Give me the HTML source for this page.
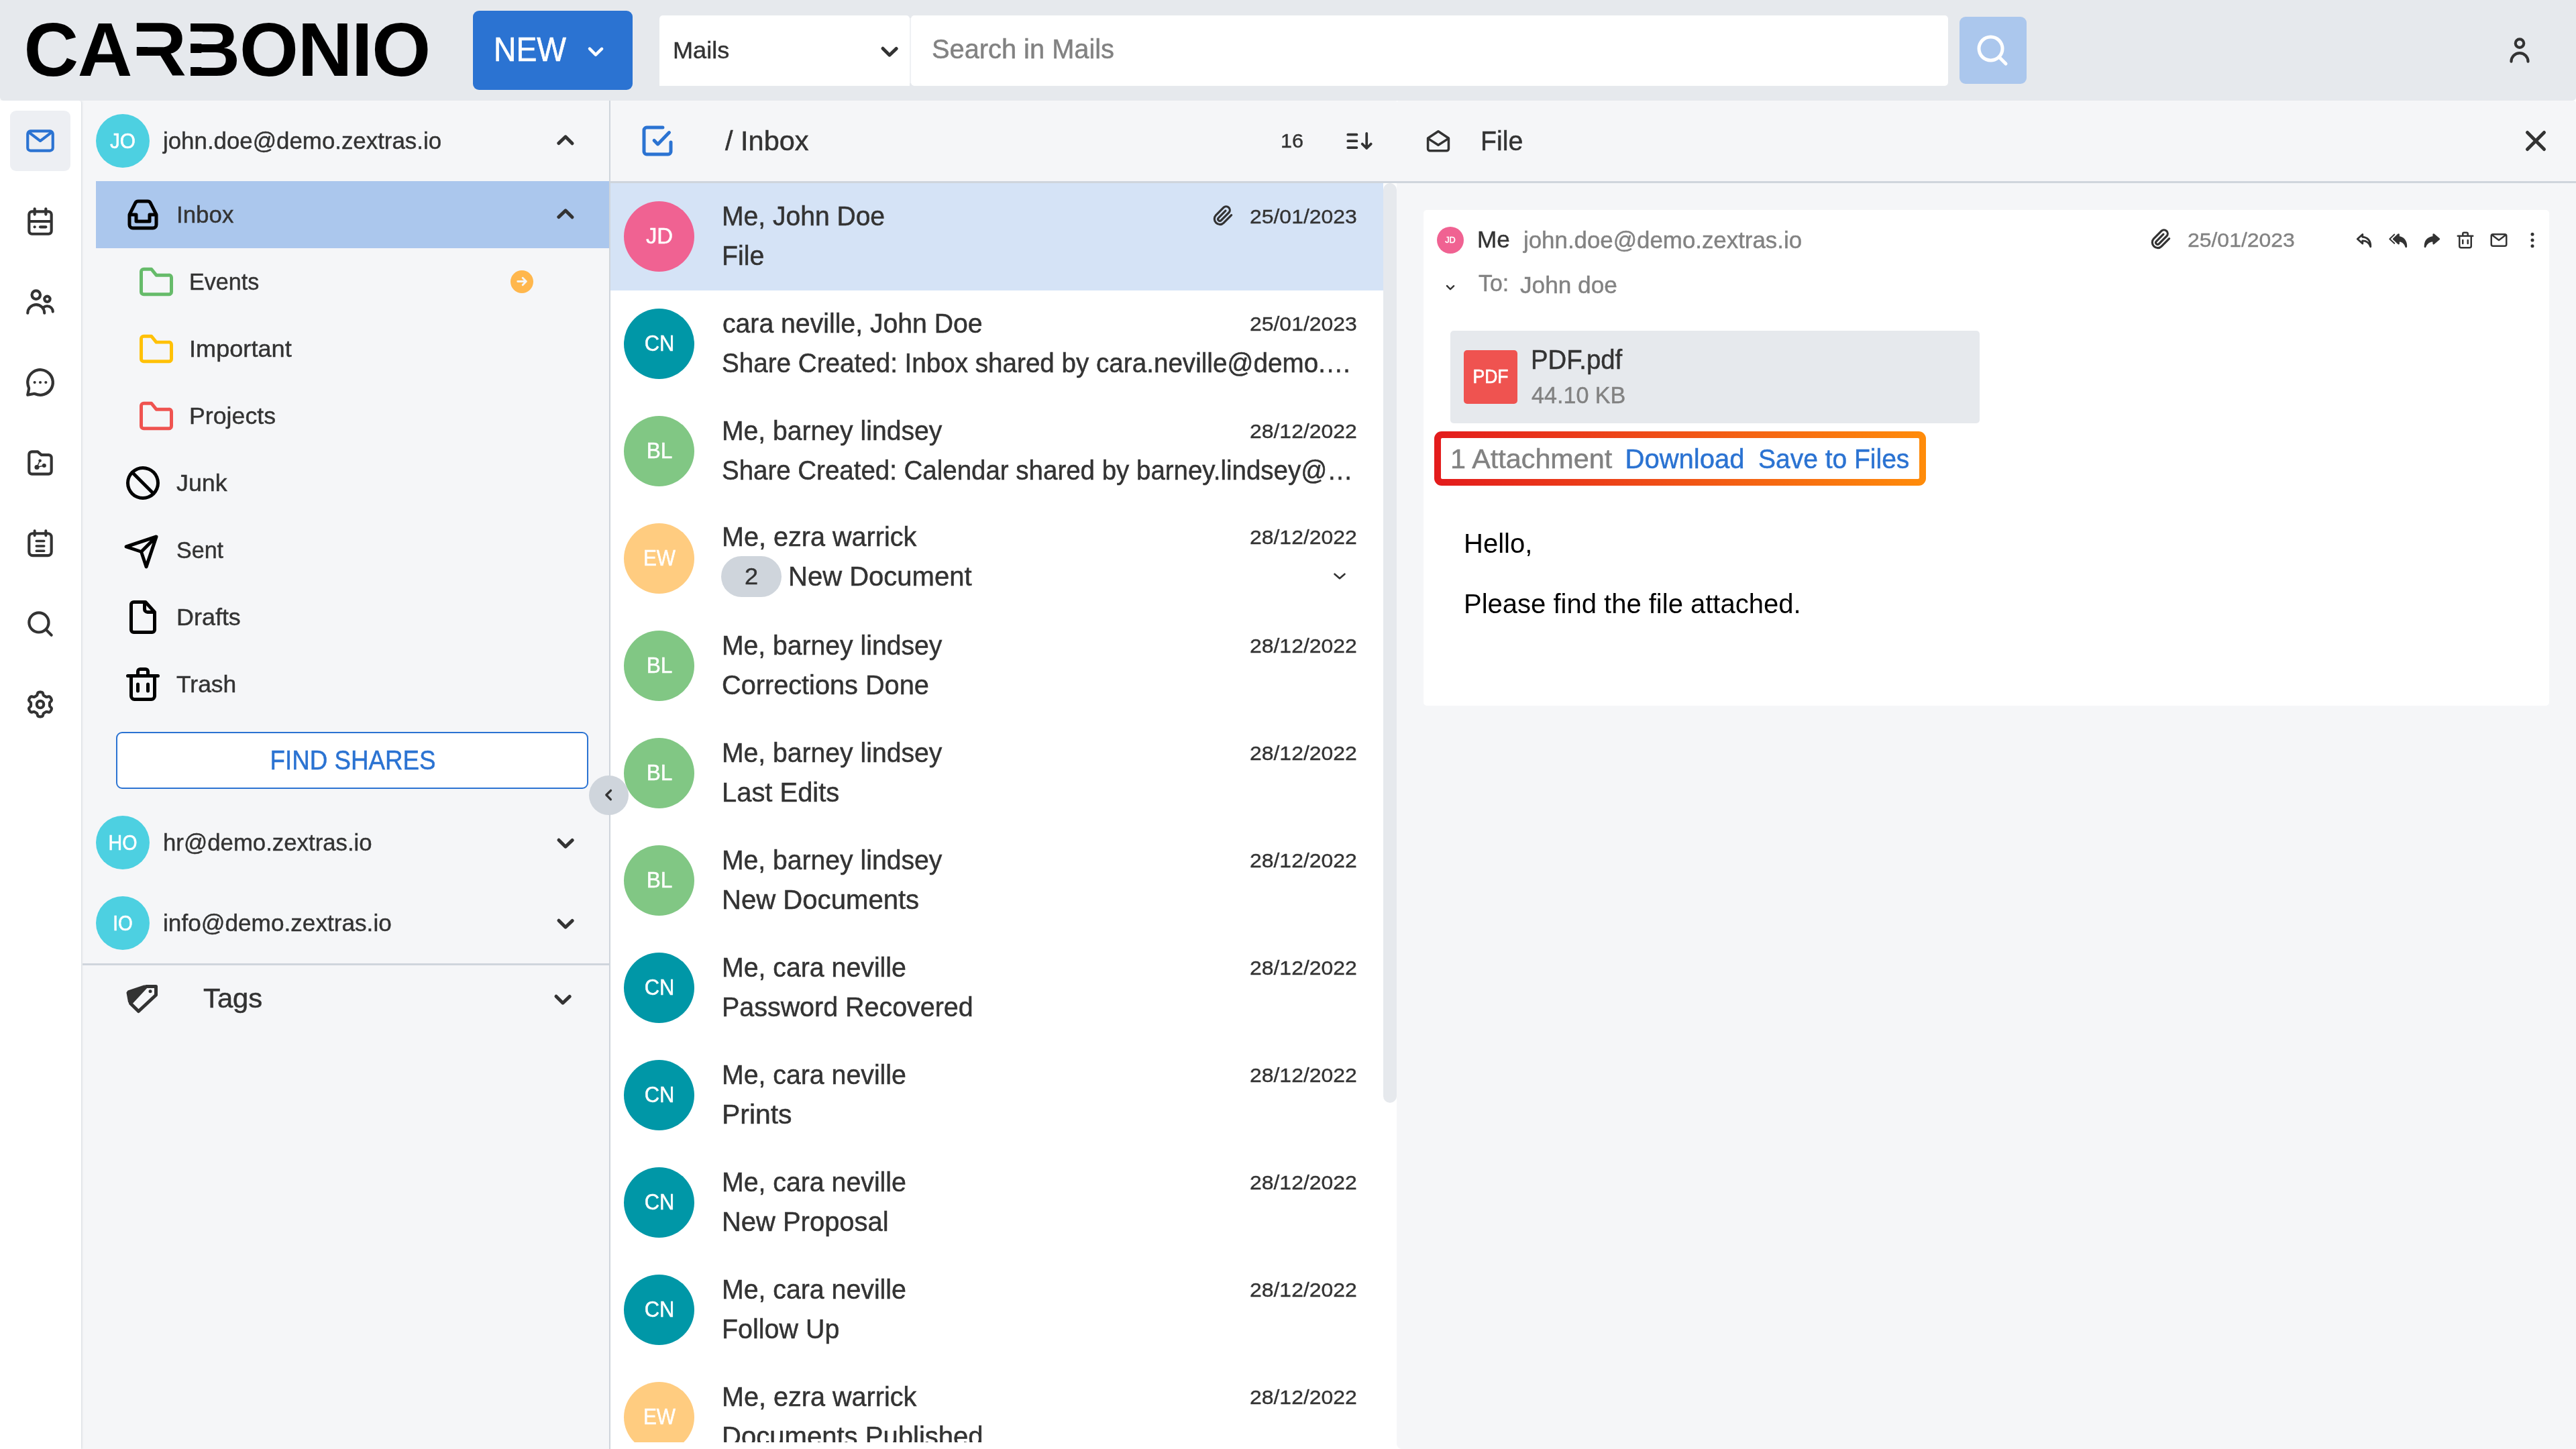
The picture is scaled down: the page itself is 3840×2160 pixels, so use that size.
<!DOCTYPE html>
<html lang="en"><head><meta charset="utf-8"><title>Carbonio - Mails</title>
<style>
html,body{margin:0;padding:0;}
body{width:3840px;height:2160px;overflow:hidden;background:#fff;position:relative;font-family:"Liberation Sans",sans-serif;}
.b{position:absolute;}
.t{position:absolute;white-space:nowrap;display:block;}
#app{position:absolute;left:0;top:0;width:3840px;height:2160px;overflow:hidden;will-change:transform;}
.ic{position:absolute;display:block;overflow:visible;}
</style></head>
<body>
<div id="app">
<div class="b" style="left:121px;top:150px;width:789px;height:2010px;background:#f5f6f8;"></div>
<div class="b" style="left:0px;top:150px;width:121px;height:2010px;background:#ffffff;border-radius:0 4px 0 0;box-shadow:1px 0 3px rgba(150,160,175,.35);"></div>
<div class="b" style="left:908px;top:150px;width:2px;height:2010px;background:#cfd5dc;"></div>
<div class="b" style="left:910px;top:150px;width:1172px;height:121px;background:#f5f6f8;"></div>
<div class="b" style="left:910px;top:273px;width:1172px;height:1887px;background:#ffffff;"></div>
<div class="b" style="left:2082px;top:150px;width:1758px;height:2010px;background:#f5f6f8;border-radius:4px 4px 0 8px;"></div>
<div class="b" style="left:910px;top:270.3px;width:2930px;height:2.7px;background:#cfd5dc;"></div>
<div class="b" style="left:0px;top:0px;width:3840px;height:150px;background:#e6e9ed;border-radius:0 0 5px 5px;"></div>
<span id="t0" class="t" style="left:35.4px;transform-origin:0 50%;top:14.1px;height:120px;line-height:120px;font-size:113px;color:#000;font-weight:700;transform:scaleX(1.0);letter-spacing:-1.2px;">CARBONIO</span>
<div class="b" style="left:202.6px;top:47.3px;width:19.4px;height:23px;background:#e6e9ed;"></div>
<div class="b" style="left:202.6px;top:83.1px;width:19.4px;height:32px;background:#e6e9ed;"></div>
<div class="b" style="left:282.8px;top:47.3px;width:19.4px;height:18px;background:#e6e9ed;"></div>
<div class="b" style="left:282.8px;top:78.7px;width:19.4px;height:21.6px;background:#e6e9ed;"></div>
<div class="b" style="left:705px;top:16px;width:238px;height:118px;background:#2b73d2;border-radius:9px;"></div>
<span id="t1" class="t" style="left:735.5px;transform-origin:0 50%;top:41.5px;height:65px;line-height:65px;font-size:50px;color:#fff;-webkit-text-stroke:0.625px;transform:scaleX(0.9265);">NEW</span>
<svg class="ic" style="left:861px;top:48.5px;width:54px;height:54px;color:#fff;" viewBox="0 0 24 24" fill="currentColor"><path d="M12 15.5a1 1 0 0 1-.71-.29l-4-4a1 1 0 1 1 1.42-1.42L12 13.1l3.3-3.18a1 1 0 1 1 1.38 1.44l-4 3.86a1 1 0 0 1-.68.28z" /></svg>
<div class="b" style="left:1350px;top:27px;width:14px;height:97px;background:#eff1f4;"></div>
<div class="b" style="left:983px;top:23px;width:373px;height:105px;background:#fff;border-radius:5px 5px 0 0;"></div>
<span id="t2" class="t" style="left:1003px;transform-origin:0 50%;top:51.5px;height:46px;line-height:46px;font-size:35px;color:#333333;-webkit-text-stroke:0.438px;transform:scaleX(1.0325);">Mails</span>
<svg class="ic" style="left:1296px;top:45.5px;width:60px;height:60px;color:#333333;" viewBox="0 0 24 24" fill="currentColor"><path d="M12 15.5a1 1 0 0 1-.71-.29l-4-4a1 1 0 1 1 1.42-1.42L12 13.1l3.3-3.18a1 1 0 1 1 1.38 1.44l-4 3.86a1 1 0 0 1-.68.28z" /></svg>
<div class="b" style="left:1358.4px;top:23px;width:1545.6px;height:105px;background:#fff;border-radius:5px;"></div>
<span id="t3" class="t" style="left:1388.5px;transform-origin:0 50%;top:47px;height:52px;line-height:52px;font-size:40px;color:#828282;-webkit-text-stroke:0.5px;transform:scaleX(0.9947);">Search in Mails</span>
<div class="b" style="left:2921px;top:25px;width:100px;height:100px;background:#abc7ed;border-radius:9px;"></div>
<svg class="ic" style="left:2940.2px;top:44.7px;width:60px;height:60px;color:#fff;" viewBox="0 0 24 24" fill="currentColor"><path d="M20.71 19.29l-3.4-3.39A7.92 7.92 0 0 0 19 11a8 8 0 1 0-8 8 7.92 7.92 0 0 0 4.9-1.69l3.39 3.4a1 1 0 0 0 1.42 0 1 1 0 0 0 0-1.42zM5 11a6 6 0 1 1 6 6 6 6 0 0 1-6-6z" /></svg>
<svg class="ic" style="left:3731px;top:50px;width:50px;height:50px;color:#333333;" viewBox="0 0 24 24" fill="currentColor"><path d="M12 11a4 4 0 1 0-4-4 4 4 0 0 0 4 4zm0-6a2 2 0 1 1-2 2 2 2 0 0 1 2-2zM12 13a7 7 0 0 0-7 7 1 1 0 0 0 2 0 5 5 0 0 1 10 0 1 1 0 0 0 2 0 7 7 0 0 0-7-7z" /></svg>
<div class="b" style="left:15px;top:165px;width:90px;height:90px;background:#edeff3;border-radius:9px;"></div>
<svg class="ic" style="left:35px;top:185px;width:50px;height:50px;color:#2b73d2;" viewBox="0 0 24 24" fill="currentColor"><path d="M19 4H5a3 3 0 0 0-3 3v10a3 3 0 0 0 3 3h14a3 3 0 0 0 3-3V7a3 3 0 0 0-3-3zm-.67 2L12 10.75 5.67 6zM19 18H5a1 1 0 0 1-1-1V7.25l7.4 5.55a1 1 0 0 0 .6.2 1 1 0 0 0 .6-.2L20 7.25V17a1 1 0 0 1-1 1z" /></svg>
<svg class="ic" style="left:35px;top:305px;width:50px;height:50px;color:#333333;" viewBox="0 0 24 24" fill="currentColor"><path d="M18 4h-1V3a1 1 0 0 0-2 0v1H9V3a1 1 0 0 0-2 0v1H6a3 3 0 0 0-3 3v12a3 3 0 0 0 3 3h12a3 3 0 0 0 3-3V7a3 3 0 0 0-3-3zM6 6h1v1a1 1 0 0 0 2 0V6h6v1a1 1 0 0 0 2 0V6h1a1 1 0 0 1 1 1v4H5V7a1 1 0 0 1 1-1zm12 14H6a1 1 0 0 1-1-1v-6h14v6a1 1 0 0 1-1 1z" /><circle cx="8" cy="16" r="1"/><path d="M16 15h-4a1 1 0 0 0 0 2h4a1 1 0 0 0 0-2z" /></svg>
<svg class="ic" style="left:35px;top:425px;width:50px;height:50px;color:#333333;" viewBox="0 0 24 24" fill="currentColor"><path d="M9 11a4 4 0 1 0-4-4 4 4 0 0 0 4 4zm0-6a2 2 0 1 1-2 2 2 2 0 0 1 2-2zM17 13a3 3 0 1 0-3-3 3 3 0 0 0 3 3zm0-4a1 1 0 1 1-1 1 1 1 0 0 1 1-1zM17 14a5 5 0 0 0-3.06 1.05A7 7 0 0 0 2 20a1 1 0 0 0 2 0 5 5 0 0 1 10 0 1 1 0 0 0 2 0 6.9 6.9 0 0 0-.86-3.35A3 3 0 0 1 20 19a1 1 0 0 0 2 0 5 5 0 0 0-5-5z" /></svg>
<svg class="ic" style="left:35px;top:545px;width:50px;height:50px;color:#333333;" viewBox="0 0 24 24" fill="currentColor"><circle cx="12" cy="12" r="1"/><circle cx="16" cy="12" r="1"/><circle cx="8" cy="12" r="1"/><path d="M19.07 4.93a10 10 0 0 0-16.28 11 1.06 1.06 0 0 1 .09.64L2 20.8a1 1 0 0 0 .27.91A1 1 0 0 0 3 22h.2l4.28-.86a1.26 1.26 0 0 1 .64.09 10 10 0 0 0 11-16.28zm.83 8.36a8 8 0 0 1-11 6.08 3.26 3.26 0 0 0-1.25-.26 3.43 3.43 0 0 0-.56.05l-2.82.57.57-2.82a3.09 3.09 0 0 0-.21-1.81 8 8 0 0 1 6.08-11 8 8 0 0 1 9.19 9.19z" /></svg>
<svg class="ic" style="left:35px;top:665px;width:50px;height:50px;color:#333333;" viewBox="0 0 24 24" fill="currentColor"><path d="M6 4h4.2l2.6 2.300h5.200a2 2 0 0 1 2 2v9.700a2 2 0 0 1-2 2H6a2 2 0 0 1-2-2V6a2 2 0 0 1 2-2z" fill="none" stroke="currentColor" stroke-width="2" stroke-linejoin="round"/><circle cx="11.8" cy="10.4" r="1.1"/><circle cx="9.6" cy="15.1" r="1.7"/><circle cx="14.8" cy="13.9" r="1.45"/><path d="M11.8 10.4L9.600 15.100L14.800 13.900" fill="none" stroke="currentColor" stroke-width="0.700"/></svg>
<svg class="ic" style="left:35px;top:785px;width:50px;height:50px;color:#333333;" viewBox="0 0 24 24" fill="currentColor"><rect x="4" y="4.9" width="16" height="15.800" rx="2.600" fill="none" stroke="currentColor" stroke-width="2"/><path d="M8 3v3.400M16 3v3.400" fill="none" stroke="currentColor" stroke-width="1.900" stroke-linecap="round"/><path d="M9.2 10.300h5.600M9.200 13.900h5.600M9.200 17.400h5.600" fill="none" stroke="currentColor" stroke-width="1.600" stroke-linecap="round"/></svg>
<svg class="ic" style="left:35px;top:905px;width:50px;height:50px;color:#333333;" viewBox="0 0 24 24" fill="currentColor"><path d="M20.71 19.29l-3.4-3.39A7.92 7.92 0 0 0 19 11a8 8 0 1 0-8 8 7.92 7.92 0 0 0 4.9-1.69l3.39 3.4a1 1 0 0 0 1.42 0 1 1 0 0 0 0-1.42zM5 11a6 6 0 1 1 6 6 6 6 0 0 1-6-6z" /></svg>
<svg class="ic" style="left:35px;top:1025px;width:50px;height:50px;color:#333333;" viewBox="0 0 24 24" fill="currentColor"><path d="M18.70 12.00L18.70 12.06L18.70 12.12L18.70 12.18L18.70 12.23L18.70 12.29L18.70 12.35L18.70 12.41L18.70 12.47L18.70 12.53L18.69 12.59L18.70 12.64L18.70 12.70L18.70 12.76L18.70 12.82L18.71 12.88L18.72 12.94L18.73 13.01L18.74 13.07L18.76 13.13L18.78 13.20L18.81 13.26L18.85 13.33L18.90 13.40L18.96 13.48L19.03 13.56L19.10 13.64L19.19 13.73L19.28 13.82L19.38 13.91L19.49 14.01L19.59 14.10L19.68 14.20L19.77 14.30L19.85 14.40L19.92 14.50L19.98 14.59L20.02 14.68L20.05 14.77L20.08 14.86L20.09 14.95L20.10 15.03L20.10 15.11L20.09 15.19L20.08 15.27L20.07 15.34L20.05 15.42L20.03 15.49L20.01 15.57L19.98 15.64L19.96 15.71L19.93 15.78L19.90 15.85L19.87 15.92L19.84 15.99L19.80 16.06L19.77 16.13L19.73 16.20L19.70 16.27L19.66 16.33L19.62 16.40L19.58 16.47L19.54 16.53L19.50 16.60L19.46 16.66L19.42 16.73L19.38 16.79L19.33 16.85L19.29 16.91L19.24 16.98L19.19 17.04L19.14 17.09L19.09 17.15L19.04 17.21L18.99 17.26L18.93 17.32L18.87 17.37L18.81 17.42L18.74 17.46L18.67 17.50L18.60 17.54L18.52 17.57L18.43 17.59L18.33 17.60L18.23 17.61L18.12 17.61L18.00 17.60L17.88 17.58L17.75 17.55L17.62 17.52L17.48 17.48L17.35 17.44L17.21 17.40L17.09 17.36L16.97 17.33L16.86 17.31L16.76 17.29L16.67 17.27L16.58 17.27L16.50 17.27L16.43 17.28L16.36 17.29L16.29 17.30L16.23 17.32L16.18 17.34L16.12 17.37L16.06 17.39L16.01 17.42L15.96 17.45L15.91 17.48L15.85 17.51L15.80 17.53L15.75 17.56L15.70 17.59L15.65 17.62L15.60 17.65L15.55 17.68L15.50 17.71L15.45 17.74L15.40 17.77L15.35 17.80L15.30 17.83L15.25 17.86L15.20 17.89L15.15 17.92L15.10 17.95L15.04 17.98L14.99 18.00L14.94 18.03L14.89 18.06L14.84 18.09L14.79 18.12L14.74 18.15L14.69 18.18L14.64 18.22L14.59 18.25L14.54 18.29L14.49 18.33L14.45 18.37L14.40 18.42L14.36 18.47L14.31 18.53L14.27 18.60L14.23 18.68L14.20 18.77L14.16 18.86L14.13 18.97L14.10 19.09L14.07 19.22L14.04 19.35L14.01 19.49L13.97 19.62L13.93 19.76L13.89 19.88L13.85 20.00L13.80 20.11L13.74 20.20L13.69 20.29L13.63 20.36L13.56 20.43L13.50 20.48L13.43 20.53L13.36 20.57L13.29 20.60L13.21 20.63L13.14 20.66L13.07 20.68L12.99 20.70L12.92 20.72L12.84 20.73L12.77 20.75L12.69 20.76L12.61 20.77L12.54 20.77L12.46 20.78L12.38 20.79L12.31 20.79L12.23 20.80L12.15 20.80L12.08 20.80L12.00 20.80L11.92 20.80L11.85 20.80L11.77 20.80L11.69 20.79L11.62 20.79L11.54 20.78L11.46 20.77L11.39 20.77L11.31 20.76L11.23 20.75L11.16 20.73L11.08 20.72L11.01 20.70L10.93 20.68L10.86 20.66L10.79 20.63L10.71 20.60L10.64 20.57L10.57 20.53L10.50 20.48L10.44 20.43L10.37 20.36L10.31 20.29L10.26 20.20L10.20 20.11L10.15 20.00L10.11 19.88L10.07 19.76L10.03 19.62L9.99 19.49L9.96 19.35L9.93 19.22L9.90 19.09L9.87 18.97L9.84 18.86L9.80 18.77L9.77 18.68L9.73 18.60L9.69 18.53L9.64 18.47L9.60 18.42L9.55 18.37L9.51 18.33L9.46 18.29L9.41 18.25L9.36 18.22L9.31 18.18L9.26 18.15L9.21 18.12L9.16 18.09L9.11 18.06L9.06 18.03L9.01 18.00L8.96 17.98L8.90 17.95L8.85 17.92L8.80 17.89L8.75 17.86L8.70 17.83L8.65 17.80L8.60 17.77L8.55 17.74L8.50 17.71L8.45 17.68L8.40 17.65L8.35 17.62L8.30 17.59L8.25 17.56L8.20 17.53L8.15 17.51L8.09 17.48L8.04 17.45L7.99 17.42L7.94 17.39L7.88 17.37L7.82 17.34L7.77 17.32L7.71 17.30L7.64 17.29L7.57 17.28L7.50 17.27L7.42 17.27L7.33 17.27L7.24 17.29L7.14 17.31L7.03 17.33L6.91 17.36L6.79 17.40L6.65 17.44L6.52 17.48L6.38 17.52L6.25 17.55L6.12 17.58L6.00 17.60L5.88 17.61L5.77 17.61L5.67 17.60L5.57 17.59L5.48 17.57L5.40 17.54L5.33 17.50L5.26 17.46L5.19 17.42L5.13 17.37L5.07 17.32L5.01 17.26L4.96 17.21L4.91 17.15L4.86 17.09L4.81 17.04L4.76 16.98L4.71 16.91L4.67 16.85L4.62 16.79L4.58 16.73L4.54 16.66L4.50 16.60L4.46 16.53L4.42 16.47L4.38 16.40L4.34 16.33L4.30 16.27L4.27 16.20L4.23 16.13L4.20 16.06L4.16 15.99L4.13 15.92L4.10 15.85L4.07 15.78L4.04 15.71L4.02 15.64L3.99 15.57L3.97 15.49L3.95 15.42L3.93 15.34L3.92 15.27L3.91 15.19L3.90 15.11L3.90 15.03L3.91 14.95L3.92 14.86L3.95 14.77L3.98 14.68L4.02 14.59L4.08 14.50L4.15 14.40L4.23 14.30L4.32 14.20L4.41 14.10L4.51 14.01L4.62 13.91L4.72 13.82L4.81 13.73L4.90 13.64L4.97 13.56L5.04 13.48L5.10 13.40L5.15 13.33L5.19 13.26L5.22 13.20L5.24 13.13L5.26 13.07L5.27 13.01L5.28 12.94L5.29 12.88L5.30 12.82L5.30 12.76L5.30 12.70L5.30 12.64L5.31 12.59L5.30 12.53L5.30 12.47L5.30 12.41L5.30 12.35L5.30 12.29L5.30 12.23L5.30 12.18L5.30 12.12L5.30 12.06L5.30 12.00L5.30 11.94L5.30 11.88L5.30 11.82L5.30 11.77L5.30 11.71L5.30 11.65L5.30 11.59L5.30 11.53L5.30 11.47L5.31 11.41L5.30 11.36L5.30 11.30L5.30 11.24L5.30 11.18L5.29 11.12L5.28 11.06L5.27 10.99L5.26 10.93L5.24 10.87L5.22 10.80L5.19 10.74L5.15 10.67L5.10 10.60L5.04 10.52L4.97 10.44L4.90 10.36L4.81 10.27L4.72 10.18L4.62 10.09L4.51 9.99L4.41 9.90L4.32 9.80L4.23 9.70L4.15 9.60L4.08 9.50L4.02 9.41L3.98 9.32L3.95 9.23L3.92 9.14L3.91 9.05L3.90 8.97L3.90 8.89L3.91 8.81L3.92 8.73L3.93 8.66L3.95 8.58L3.97 8.51L3.99 8.43L4.02 8.36L4.04 8.29L4.07 8.22L4.10 8.15L4.13 8.08L4.16 8.01L4.20 7.94L4.23 7.87L4.27 7.80L4.30 7.73L4.34 7.67L4.38 7.60L4.42 7.53L4.46 7.47L4.50 7.40L4.54 7.34L4.58 7.27L4.62 7.21L4.67 7.15L4.71 7.09L4.76 7.02L4.81 6.96L4.86 6.91L4.91 6.85L4.96 6.79L5.01 6.74L5.07 6.68L5.13 6.63L5.19 6.58L5.26 6.54L5.33 6.50L5.40 6.46L5.48 6.43L5.57 6.41L5.67 6.40L5.77 6.39L5.88 6.39L6.00 6.40L6.12 6.42L6.25 6.45L6.38 6.48L6.52 6.52L6.65 6.56L6.79 6.60L6.91 6.64L7.03 6.67L7.14 6.69L7.24 6.71L7.33 6.73L7.42 6.73L7.50 6.73L7.57 6.72L7.64 6.71L7.71 6.70L7.77 6.68L7.82 6.66L7.88 6.63L7.94 6.61L7.99 6.58L8.04 6.55L8.09 6.52L8.15 6.49L8.20 6.47L8.25 6.44L8.30 6.41L8.35 6.38L8.40 6.35L8.45 6.32L8.50 6.29L8.55 6.26L8.60 6.23L8.65 6.20L8.70 6.17L8.75 6.14L8.80 6.11L8.85 6.08L8.90 6.05L8.96 6.02L9.01 6.00L9.06 5.97L9.11 5.94L9.16 5.91L9.21 5.88L9.26 5.85L9.31 5.82L9.36 5.78L9.41 5.75L9.46 5.71L9.51 5.67L9.55 5.63L9.60 5.58L9.64 5.53L9.69 5.47L9.73 5.40L9.77 5.32L9.80 5.23L9.84 5.14L9.87 5.03L9.90 4.91L9.93 4.78L9.96 4.65L9.99 4.51L10.03 4.38L10.07 4.24L10.11 4.12L10.15 4.00L10.20 3.89L10.26 3.80L10.31 3.71L10.37 3.64L10.44 3.57L10.50 3.52L10.57 3.47L10.64 3.43L10.71 3.40L10.79 3.37L10.86 3.34L10.93 3.32L11.01 3.30L11.08 3.28L11.16 3.27L11.23 3.25L11.31 3.24L11.39 3.23L11.46 3.23L11.54 3.22L11.62 3.21L11.69 3.21L11.77 3.20L11.85 3.20L11.92 3.20L12.00 3.20L12.08 3.20L12.15 3.20L12.23 3.20L12.31 3.21L12.38 3.21L12.46 3.22L12.54 3.23L12.61 3.23L12.69 3.24L12.77 3.25L12.84 3.27L12.92 3.28L12.99 3.30L13.07 3.32L13.14 3.34L13.21 3.37L13.29 3.40L13.36 3.43L13.43 3.47L13.50 3.52L13.56 3.57L13.63 3.64L13.69 3.71L13.74 3.80L13.80 3.89L13.85 4.00L13.89 4.12L13.93 4.24L13.97 4.38L14.01 4.51L14.04 4.65L14.07 4.78L14.10 4.91L14.13 5.03L14.16 5.14L14.20 5.23L14.23 5.32L14.27 5.40L14.31 5.47L14.36 5.53L14.40 5.58L14.45 5.63L14.49 5.67L14.54 5.71L14.59 5.75L14.64 5.78L14.69 5.82L14.74 5.85L14.79 5.88L14.84 5.91L14.89 5.94L14.94 5.97L14.99 6.00L15.04 6.02L15.10 6.05L15.15 6.08L15.20 6.11L15.25 6.14L15.30 6.17L15.35 6.20L15.40 6.23L15.45 6.26L15.50 6.29L15.55 6.32L15.60 6.35L15.65 6.38L15.70 6.41L15.75 6.44L15.80 6.47L15.85 6.49L15.91 6.52L15.96 6.55L16.01 6.58L16.06 6.61L16.12 6.63L16.18 6.66L16.23 6.68L16.29 6.70L16.36 6.71L16.43 6.72L16.50 6.73L16.58 6.73L16.67 6.73L16.76 6.71L16.86 6.69L16.97 6.67L17.09 6.64L17.21 6.60L17.35 6.56L17.48 6.52L17.62 6.48L17.75 6.45L17.88 6.42L18.00 6.40L18.12 6.39L18.23 6.39L18.33 6.40L18.43 6.41L18.52 6.43L18.60 6.46L18.67 6.50L18.74 6.54L18.81 6.58L18.87 6.63L18.93 6.68L18.99 6.74L19.04 6.79L19.09 6.85L19.14 6.91L19.19 6.96L19.24 7.02L19.29 7.09L19.33 7.15L19.38 7.21L19.42 7.27L19.46 7.34L19.50 7.40L19.54 7.47L19.58 7.53L19.62 7.60L19.66 7.67L19.70 7.73L19.73 7.80L19.77 7.87L19.80 7.94L19.84 8.01L19.87 8.08L19.90 8.15L19.93 8.22L19.96 8.29L19.98 8.36L20.01 8.43L20.03 8.51L20.05 8.58L20.07 8.66L20.08 8.73L20.09 8.81L20.10 8.89L20.10 8.97L20.09 9.05L20.08 9.14L20.05 9.23L20.02 9.32L19.98 9.41L19.92 9.50L19.85 9.60L19.77 9.70L19.68 9.80L19.59 9.90L19.49 9.99L19.38 10.09L19.28 10.18L19.19 10.27L19.10 10.36L19.03 10.44L18.96 10.52L18.90 10.60L18.85 10.67L18.81 10.74L18.78 10.80L18.76 10.87L18.74 10.93L18.73 10.99L18.72 11.06L18.71 11.12L18.70 11.18L18.70 11.24L18.70 11.30L18.70 11.36L18.69 11.41L18.70 11.47L18.70 11.53L18.70 11.59L18.70 11.65L18.70 11.71L18.70 11.77L18.70 11.82L18.70 11.88L18.70 11.94Z" fill="none" stroke="currentColor" stroke-width="2" stroke-linejoin="round"/><circle cx="12" cy="12" r="2.500" fill="none" stroke="currentColor" stroke-width="2"/></svg>
<div class="b" style="left:143px;top:170px;width:80px;height:80px;background:#4dd0e1;border-radius:50%;"></div>
<span id="t4" class="t" style="left:183px;transform-origin:50% 50%;top:190.5px;height:40px;line-height:40px;font-size:31px;color:#fff;-webkit-text-stroke:0.388px;transform:translateX(-50%) scaleX(0.961);-webkit-text-stroke:0.6px;">JO</span>
<span id="t5" class="t" style="left:242.5px;transform-origin:0 50%;top:187px;height:46px;line-height:46px;font-size:35px;color:#333333;-webkit-text-stroke:0.438px;transform:scaleX(0.9957);">john.doe@demo.zextras.io</span>
<svg class="ic" style="left:813px;top:180px;width:60px;height:60px;color:#333333;" viewBox="0 0 24 24" fill="currentColor"><g transform="rotate(180 12 12)"><path d="M12 15.5a1 1 0 0 1-.71-.29l-4-4a1 1 0 1 1 1.42-1.42L12 13.1l3.3-3.18a1 1 0 1 1 1.38 1.44l-4 3.86a1 1 0 0 1-.68.28z" /></g></svg>
<div class="b" style="left:143px;top:270px;width:765px;height:100px;background:#abc7ed;"></div>
<svg class="ic" style="left:182.5px;top:290px;width:60px;height:60px;color:#000;" viewBox="0 0 24 24" fill="currentColor"><path d="M20.79 11.34l-3.34-6.68A3 3 0 0 0 14.76 3H9.24a3 3 0 0 0-2.69 1.66l-3.34 6.68a2 2 0 0 0-.21.9V18a3 3 0 0 0 3 3h12a3 3 0 0 0 3-3v-5.76a2 2 0 0 0-.21-.9zM8.34 5.55a1 1 0 0 1 .9-.55h5.52a1 1 0 0 1 .9.55L18.38 11H16a1 1 0 0 0-1 1v3H9v-3a1 1 0 0 0-1-1H5.62zM18 19H6a1 1 0 0 1-1-1v-5h2v3a1 1 0 0 0 1 1h8a1 1 0 0 0 1-1v-3h2v5a1 1 0 0 1-1 1z" /></svg>
<span id="t6" class="t" style="left:262.5px;transform-origin:0 50%;top:297px;height:46px;line-height:46px;font-size:35px;color:#333333;-webkit-text-stroke:0.438px;transform:scaleX(0.9975);">Inbox</span>
<svg class="ic" style="left:813px;top:290px;width:60px;height:60px;color:#333333;" viewBox="0 0 24 24" fill="currentColor"><g transform="rotate(180 12 12)"><path d="M12 15.5a1 1 0 0 1-.71-.29l-4-4a1 1 0 1 1 1.42-1.42L12 13.1l3.3-3.18a1 1 0 1 1 1.38 1.44l-4 3.86a1 1 0 0 1-.68.28z" /></g></svg>
<svg class="ic" style="left:203px;top:389.5px;width:60px;height:60px;color:#66bb6a;" viewBox="0 0 24 24" fill="currentColor"><path d="M19.5 20.5h-15A2.47 2.47 0 0 1 2 18.07V5.93A2.47 2.47 0 0 1 4.5 3.5h4.6a1 1 0 0 1 .77.37l2.6 3.18h7A2.47 2.47 0 0 1 22 9.48v8.59a2.47 2.47 0 0 1-2.5 2.43zM4 13.76v4.31a.46.46 0 0 0 .5.43h15a.46.46 0 0 0 .5-.43V9.48a.46.46 0 0 0-.5-.43H12a1 1 0 0 1-.77-.37L8.63 5.5H4.5a.46.46 0 0 0-.5.43z" /></svg>
<span id="t7" class="t" style="left:282px;transform-origin:0 50%;top:397px;height:46px;line-height:46px;font-size:35px;color:#333333;-webkit-text-stroke:0.438px;transform:scaleX(0.9738);">Events</span>
<svg class="ic" style="left:203px;top:489.5px;width:60px;height:60px;color:#ffc107;" viewBox="0 0 24 24" fill="currentColor"><path d="M19.5 20.5h-15A2.47 2.47 0 0 1 2 18.07V5.93A2.47 2.47 0 0 1 4.5 3.5h4.6a1 1 0 0 1 .77.37l2.6 3.18h7A2.47 2.47 0 0 1 22 9.48v8.59a2.47 2.47 0 0 1-2.5 2.43zM4 13.76v4.31a.46.46 0 0 0 .5.43h15a.46.46 0 0 0 .5-.43V9.48a.46.46 0 0 0-.5-.43H12a1 1 0 0 1-.77-.37L8.63 5.5H4.5a.46.46 0 0 0-.5.43z" /></svg>
<span id="t8" class="t" style="left:282px;transform-origin:0 50%;top:497px;height:46px;line-height:46px;font-size:35px;color:#333333;-webkit-text-stroke:0.438px;transform:scaleX(1.0327);">Important</span>
<svg class="ic" style="left:203px;top:589.5px;width:60px;height:60px;color:#ef5350;" viewBox="0 0 24 24" fill="currentColor"><path d="M19.5 20.5h-15A2.47 2.47 0 0 1 2 18.07V5.93A2.47 2.47 0 0 1 4.5 3.5h4.6a1 1 0 0 1 .77.37l2.6 3.18h7A2.47 2.47 0 0 1 22 9.48v8.59a2.47 2.47 0 0 1-2.5 2.43zM4 13.76v4.31a.46.46 0 0 0 .5.43h15a.46.46 0 0 0 .5-.43V9.48a.46.46 0 0 0-.5-.43H12a1 1 0 0 1-.77-.37L8.63 5.5H4.5a.46.46 0 0 0-.5.43z" /></svg>
<span id="t9" class="t" style="left:282px;transform-origin:0 50%;top:597px;height:46px;line-height:46px;font-size:35px;color:#333333;-webkit-text-stroke:0.438px;transform:scaleX(1.0206);">Projects</span>
<div class="b" style="left:761px;top:402.6px;width:34px;height:34px;background:#ffb74d;border-radius:50%;"></div>
<svg class="ic" style="left:765.3px;top:406.1px;width:27px;height:27px;color:#f5f6f8;" viewBox="0 0 24 24" fill="currentColor"><path d="M6 12h11M12.6 7.400l4.600 4.600-4.600 4.600" fill="none" stroke="currentColor" stroke-width="2.600" stroke-linecap="round" stroke-linejoin="round"/></svg>
<svg class="ic" style="left:182.5px;top:690px;width:60px;height:60px;color:#000;" viewBox="0 0 24 24" fill="currentColor"><path d="M12 2a10 10 0 1 0 10 10A10 10 0 0 0 12 2zm8 10a7.92 7.92 0 0 1-1.69 4.9L7.1 5.69A7.92 7.92 0 0 1 12 4a8 8 0 0 1 8 8zM4 12a7.92 7.92 0 0 1 1.69-4.9L16.9 18.31A7.92 7.92 0 0 1 12 20a8 8 0 0 1-8-8z" /></svg>
<span id="t10" class="t" style="left:262.5px;transform-origin:0 50%;top:697px;height:46px;line-height:46px;font-size:35px;color:#333333;-webkit-text-stroke:0.438px;transform:scaleX(1.0226);">Junk</span>
<svg class="ic" style="left:182.5px;top:790px;width:60px;height:60px;color:#000;" viewBox="0 0 24 24" fill="currentColor"><path d="M21 4a1.31 1.31 0 0 0-.06-.27v-.09a1 1 0 0 0-.2-.3 1 1 0 0 0-.29-.19h-.09a.86.86 0 0 0-.31-.15H20a1 1 0 0 0-.3 0l-18 6a1 1 0 0 0 0 1.9l8.53 2.84 2.84 8.53a1 1 0 0 0 1.9 0l6-18A1 1 0 0 0 21 4zm-4.7 2.29l-5.57 5.57L5.16 10zM14 18.84l-1.86-5.57 5.57-5.57z" /></svg>
<span id="t11" class="t" style="left:262.5px;transform-origin:0 50%;top:797px;height:46px;line-height:46px;font-size:35px;color:#333333;-webkit-text-stroke:0.438px;transform:scaleX(0.9732);">Sent</span>
<svg class="ic" style="left:182.5px;top:890px;width:60px;height:60px;color:#000;" viewBox="0 0 24 24" fill="currentColor"><path d="M19.74 8.33l-5.44-6a1 1 0 0 0-.74-.33h-7A2.53 2.53 0 0 0 4 4.5v15A2.53 2.53 0 0 0 6.56 22h10.88A2.53 2.53 0 0 0 20 19.5V9a1 1 0 0 0-.26-.67zM14 5l2.74 3h-2a.79.79 0 0 1-.74-.85zm3.44 15H6.56a.53.53 0 0 1-.56-.5v-15a.53.53 0 0 1 .56-.5H12v3.15A2.79 2.79 0 0 0 14.71 10H18v9.5a.53.53 0 0 1-.56.5z" /></svg>
<span id="t12" class="t" style="left:262.5px;transform-origin:0 50%;top:897px;height:46px;line-height:46px;font-size:35px;color:#333333;-webkit-text-stroke:0.438px;transform:scaleX(1.0267);">Drafts</span>
<svg class="ic" style="left:182.5px;top:990px;width:60px;height:60px;color:#000;" viewBox="0 0 24 24" fill="currentColor"><path d="M21 6h-5V4.33A2.42 2.42 0 0 0 13.5 2h-3A2.42 2.42 0 0 0 8 4.33V6H3a1 1 0 0 0 0 2h1v11a3 3 0 0 0 3 3h10a3 3 0 0 0 3-3V8h1a1 1 0 0 0 0-2zM10 4.33c0-.16.21-.33.5-.33h3c.29 0 .5.17.5.33V6h-4zM18 19a1 1 0 0 1-1 1H7a1 1 0 0 1-1-1V8h12z" /><path d="M9 17a1 1 0 0 0 1-1v-4a1 1 0 0 0-2 0v4a1 1 0 0 0 1 1zM15 17a1 1 0 0 0 1-1v-4a1 1 0 0 0-2 0v4a1 1 0 0 0 1 1z" /></svg>
<span id="t13" class="t" style="left:262.5px;transform-origin:0 50%;top:997px;height:46px;line-height:46px;font-size:35px;color:#333333;-webkit-text-stroke:0.438px;transform:scaleX(1.0126);">Trash</span>
<div class="b" style="left:173px;top:1090.5px;width:704px;height:85px;background:#fff;border:2.5px solid #2b73d2;border-radius:9px;box-sizing:border-box;"></div>
<span id="t14" class="t" style="left:525.5px;transform-origin:50% 50%;top:1107px;height:52px;line-height:52px;font-size:40px;color:#2b73d2;-webkit-text-stroke:0.5px;transform:translateX(-50%) scaleX(0.9185);">FIND SHARES</span>
<div class="b" style="left:143px;top:1216px;width:80px;height:80px;background:#4dd0e1;border-radius:50%;"></div>
<span id="t15" class="t" style="left:183px;transform-origin:50% 50%;top:1236.5px;height:40px;line-height:40px;font-size:31px;color:#fff;-webkit-text-stroke:0.388px;transform:translateX(-50%) scaleX(0.9241);-webkit-text-stroke:0.6px;">HO</span>
<span id="t16" class="t" style="left:242.5px;transform-origin:0 50%;top:1233px;height:46px;line-height:46px;font-size:35px;color:#333333;-webkit-text-stroke:0.438px;transform:scaleX(0.9935);">hr@demo.zextras.io</span>
<svg class="ic" style="left:813px;top:1226px;width:60px;height:60px;color:#333333;" viewBox="0 0 24 24" fill="currentColor"><path d="M12 15.5a1 1 0 0 1-.71-.29l-4-4a1 1 0 1 1 1.42-1.42L12 13.1l3.3-3.18a1 1 0 1 1 1.38 1.44l-4 3.86a1 1 0 0 1-.68.28z" /></svg>
<div class="b" style="left:143px;top:1336px;width:80px;height:80px;background:#4dd0e1;border-radius:50%;"></div>
<span id="t17" class="t" style="left:183px;transform-origin:50% 50%;top:1356.5px;height:40px;line-height:40px;font-size:31px;color:#fff;-webkit-text-stroke:0.388px;transform:translateX(-50%) scaleX(0.9018);-webkit-text-stroke:0.6px;">IO</span>
<span id="t18" class="t" style="left:242.5px;transform-origin:0 50%;top:1353px;height:46px;line-height:46px;font-size:35px;color:#333333;-webkit-text-stroke:0.438px;transform:scaleX(1.0052);">info@demo.zextras.io</span>
<svg class="ic" style="left:813px;top:1346px;width:60px;height:60px;color:#333333;" viewBox="0 0 24 24" fill="currentColor"><path d="M12 15.5a1 1 0 0 1-.71-.29l-4-4a1 1 0 1 1 1.42-1.42L12 13.1l3.3-3.18a1 1 0 1 1 1.38 1.44l-4 3.86a1 1 0 0 1-.68.28z" /></svg>
<div class="b" style="left:123px;top:1435.5px;width:785px;height:3px;background:#cfd5dc;"></div>
<svg class="ic" style="left:182px;top:1459px;width:60px;height:60px;color:#333333;" viewBox="0 0 24 24" fill="currentColor"><path d="M14.4 4.600h5.800v5.100L9.800 19.400 5 14.700z" fill="none" stroke="currentColor" stroke-width="2" stroke-linejoin="round"/><path d="M3 8.300L3.600 7.400 13.200 4.200 14.400 4.600 5 14.700 4 13.800z" stroke="currentColor" stroke-width="0.800" stroke-linejoin="round"/><circle cx="16.8" cy="7.500" r="1"/></svg>
<span id="t19" class="t" style="left:302.5px;transform-origin:0 50%;top:1462px;height:52px;line-height:52px;font-size:40px;color:#333333;-webkit-text-stroke:0.5px;transform:scaleX(1.0438);">Tags</span>
<svg class="ic" style="left:809px;top:1459px;width:60px;height:60px;color:#333333;" viewBox="0 0 24 24" fill="currentColor"><path d="M12 15.5a1 1 0 0 1-.71-.29l-4-4a1 1 0 1 1 1.42-1.42L12 13.1l3.3-3.18a1 1 0 1 1 1.38 1.44l-4 3.86a1 1 0 0 1-.68.28z" /></svg>
<div class="b" style="left:878px;top:1155.5px;width:59px;height:59px;background:#cfd5dc;border-radius:50%;"></div>
<svg class="ic" style="left:887.5px;top:1165px;width:40px;height:40px;color:#333333;" viewBox="0 0 24 24" fill="currentColor"><g transform="rotate(90 12 12)"><path d="M12 15.5a1 1 0 0 1-.71-.29l-4-4a1 1 0 1 1 1.42-1.42L12 13.1l3.3-3.18a1 1 0 1 1 1.38 1.44l-4 3.86a1 1 0 0 1-.68.28z" /></g></svg>
<svg class="ic" style="left:950px;top:179.5px;width:60px;height:60px;color:#2b73d2;" viewBox="0 0 24 24" fill="currentColor"><path d="M20 11.83a1 1 0 0 0-1 1v5.57a.6.6 0 0 1-.6.6H5.6a.6.6 0 0 1-.6-.6V5.6a.6.6 0 0 1 .6-.6h9.57a1 1 0 1 0 0-2H5.6A2.61 2.61 0 0 0 3 5.6v12.8A2.61 2.61 0 0 0 5.6 21h12.8a2.61 2.61 0 0 0 2.6-2.6v-5.57a1 1 0 0 0-1-1z" /><path d="M10.72 11a1 1 0 0 0-1.44 1.38l2.22 2.33a1 1 0 0 0 .72.31 1 1 0 0 0 .72-.3l6.78-7a1 1 0 1 0-1.44-1.4l-6.05 6.26z" /></svg>
<span id="t20" class="t" style="left:1080.5px;transform-origin:0 50%;top:184px;height:52px;line-height:52px;font-size:40px;color:#333333;-webkit-text-stroke:0.5px;transform:scaleX(1.037);">/ Inbox</span>
<span id="t21" class="t" style="left:1908.5px;transform-origin:0 50%;top:189.5px;height:39px;line-height:39px;font-size:30px;color:#333333;-webkit-text-stroke:0.375px;transform:scaleX(1.0218);">16</span>
<svg class="ic" style="left:2002px;top:185px;width:50px;height:50px;color:#333333;" viewBox="0 0 24 24" fill="currentColor"><path d="M3.5 7.500h6.300M3.500 12.100h6.300M3.500 16.800h6.300" fill="none" stroke="currentColor" stroke-width="1.800" stroke-linecap="round"/><path d="M16.900 6.600v10.700M13.800 14.200l3.100 3.100 3.100-3.100" fill="none" stroke="currentColor" stroke-width="1.800" stroke-linecap="round" stroke-linejoin="round"/></svg>
<div class="b" style="left:910px;top:273px;width:1152px;height:1877px;overflow:hidden;">
<div class="b" style="left:0px;top:0px;width:1152px;height:159.7px;background:#d5e3f6;"></div>
<div class="b" style="left:20px;top:27px;width:105px;height:105px;background:#f06292;border-radius:50%;"></div>
<span id="t22" class="t" style="left:72.5px;transform-origin:50% 50%;top:57px;height:43px;line-height:43px;font-size:33px;color:#fff;-webkit-text-stroke:0.413px;transform:translateX(-50%) scaleX(0.9966);-webkit-text-stroke:0.5px;">JD</span>
<span id="t23" class="t" style="left:165.5px;transform-origin:0 50%;top:23px;height:52px;line-height:52px;font-size:40px;color:#333333;-webkit-text-stroke:0.5px;transform:scaleX(0.9761);">Me, John Doe</span>
<span id="t24" class="t" style="left:165.5px;transform-origin:0 50%;top:82px;height:52px;line-height:52px;font-size:40px;color:#333333;-webkit-text-stroke:0.5px;transform:scaleX(0.9806);">File</span>
<span id="t25" class="t" style="left:952.5px;transform-origin:0 50%;top:29.5px;height:39px;line-height:39px;font-size:30px;color:#333333;-webkit-text-stroke:0.375px;transform:scaleX(1.064);">25/01/2023</span>
<svg class="ic" style="left:894px;top:30px;width:38px;height:38px;color:#333333;" viewBox="0 0 24 24" fill="currentColor"><path d="M9.29 21a6.23 6.23 0 0 1-4.43-1.88 6 6 0 0 1-.22-8.49L12 3.2A4.11 4.11 0 0 1 15 2a4.48 4.48 0 0 1 3.19 1.35 4.36 4.36 0 0 1 .15 6.13l-7.4 7.43a2.54 2.54 0 0 1-1.81.75 2.72 2.72 0 0 1-1.95-.82 2.68 2.68 0 0 1-.08-3.77l6.83-6.86a1 1 0 0 1 1.37 1.41l-6.83 6.86a.68.68 0 0 0 .08.95.78.78 0 0 0 .53.23.56.56 0 0 0 .4-.16l7.39-7.43a2.36 2.36 0 0 0-.15-3.31 2.38 2.38 0 0 0-3.27-.15L6.06 12a4 4 0 0 0 .22 5.67 4.22 4.22 0 0 0 3 1.29 3.67 3.67 0 0 0 2.61-1.06l7.39-7.43a1 1 0 1 1 1.42 1.41l-7.39 7.43A5.65 5.65 0 0 1 9.29 21z" /></svg>
<div class="b" style="left:20px;top:187px;width:105px;height:105px;background:#0097a7;border-radius:50%;"></div>
<span id="t26" class="t" style="left:72.5px;transform-origin:50% 50%;top:217px;height:43px;line-height:43px;font-size:33px;color:#fff;-webkit-text-stroke:0.413px;transform:translateX(-50%) scaleX(0.9377);-webkit-text-stroke:0.5px;">CN</span>
<span id="t27" class="t" style="left:166.5px;transform-origin:0 50%;top:183px;height:52px;line-height:52px;font-size:40px;color:#333333;-webkit-text-stroke:0.5px;transform:scaleX(0.9793);">cara neville, John Doe</span>
<span id="t28" class="t" style="left:165.5px;transform-origin:0 50%;top:242px;height:52px;line-height:52px;font-size:40px;color:#333333;-webkit-text-stroke:0.5px;transform:scaleX(0.9653);">Share Created: Inbox shared by cara.neville@demo.…</span>
<span id="t29" class="t" style="left:952.5px;transform-origin:0 50%;top:189.5px;height:39px;line-height:39px;font-size:30px;color:#333333;-webkit-text-stroke:0.375px;transform:scaleX(1.064);">25/01/2023</span>
<div class="b" style="left:20px;top:347px;width:105px;height:105px;background:#81c784;border-radius:50%;"></div>
<span id="t30" class="t" style="left:72.5px;transform-origin:50% 50%;top:377px;height:43px;line-height:43px;font-size:33px;color:#fff;-webkit-text-stroke:0.413px;transform:translateX(-50%) scaleX(0.9578);-webkit-text-stroke:0.5px;">BL</span>
<span id="t31" class="t" style="left:165.5px;transform-origin:0 50%;top:343px;height:52px;line-height:52px;font-size:40px;color:#333333;-webkit-text-stroke:0.5px;transform:scaleX(0.9779);">Me, barney lindsey</span>
<span id="t32" class="t" style="left:165.5px;transform-origin:0 50%;top:402px;height:52px;line-height:52px;font-size:40px;color:#333333;-webkit-text-stroke:0.5px;transform:scaleX(0.9617);">Share Created: Calendar shared by barney.lindsey@…</span>
<span id="t33" class="t" style="left:952.5px;transform-origin:0 50%;top:349.5px;height:39px;line-height:39px;font-size:30px;color:#333333;-webkit-text-stroke:0.375px;transform:scaleX(1.064);">28/12/2022</span>
<div class="b" style="left:20px;top:507px;width:105px;height:105px;background:#ffcc80;border-radius:50%;"></div>
<span id="t34" class="t" style="left:72.5px;transform-origin:50% 50%;top:537px;height:43px;line-height:43px;font-size:33px;color:#fff;-webkit-text-stroke:0.413px;transform:translateX(-50%) scaleX(0.9059);-webkit-text-stroke:0.5px;">EW</span>
<span id="t35" class="t" style="left:165.5px;transform-origin:0 50%;top:501px;height:52px;line-height:52px;font-size:40px;color:#333333;-webkit-text-stroke:0.5px;transform:scaleX(0.9894);">Me, ezra warrick</span>
<div class="b" style="left:165px;top:555.5px;width:90px;height:61.5px;background:#cfd5dc;border-radius:31px;"></div>
<span id="t36" class="t" style="left:210px;transform-origin:50% 50%;top:563px;height:46px;line-height:46px;font-size:35px;color:#333333;-webkit-text-stroke:0.438px;transform:translateX(-50%) scaleX(1.0353);">2</span>
<span id="t37" class="t" style="left:265px;transform-origin:0 50%;top:560px;height:52px;line-height:52px;font-size:40px;color:#333333;-webkit-text-stroke:0.5px;transform:scaleX(1.0003);">New Document</span>
<span id="t38" class="t" style="left:952.5px;transform-origin:0 50%;top:508px;height:39px;line-height:39px;font-size:30px;color:#333333;-webkit-text-stroke:0.375px;transform:scaleX(1.064);">28/12/2022</span>
<svg class="ic" style="left:1072px;top:571px;width:30px;height:30px;color:#333333;" viewBox="0 0 24 24" fill="currentColor"><path d="M6 9.400l6 5.200 6-5.200" fill="none" stroke="currentColor" stroke-width="2.100" stroke-linecap="round" stroke-linejoin="round"/></svg>
<div class="b" style="left:20px;top:667px;width:105px;height:105px;background:#81c784;border-radius:50%;"></div>
<span id="t39" class="t" style="left:72.5px;transform-origin:50% 50%;top:697px;height:43px;line-height:43px;font-size:33px;color:#fff;-webkit-text-stroke:0.413px;transform:translateX(-50%) scaleX(0.9578);-webkit-text-stroke:0.5px;">BL</span>
<span id="t40" class="t" style="left:165.5px;transform-origin:0 50%;top:663px;height:52px;line-height:52px;font-size:40px;color:#333333;-webkit-text-stroke:0.5px;transform:scaleX(0.9779);">Me, barney lindsey</span>
<span id="t41" class="t" style="left:165.5px;transform-origin:0 50%;top:722px;height:52px;line-height:52px;font-size:40px;color:#333333;-webkit-text-stroke:0.5px;transform:scaleX(0.9922);">Corrections Done</span>
<span id="t42" class="t" style="left:952.5px;transform-origin:0 50%;top:669.5px;height:39px;line-height:39px;font-size:30px;color:#333333;-webkit-text-stroke:0.375px;transform:scaleX(1.064);">28/12/2022</span>
<div class="b" style="left:20px;top:827px;width:105px;height:105px;background:#81c784;border-radius:50%;"></div>
<span id="t43" class="t" style="left:72.5px;transform-origin:50% 50%;top:857px;height:43px;line-height:43px;font-size:33px;color:#fff;-webkit-text-stroke:0.413px;transform:translateX(-50%) scaleX(0.9578);-webkit-text-stroke:0.5px;">BL</span>
<span id="t44" class="t" style="left:165.5px;transform-origin:0 50%;top:823px;height:52px;line-height:52px;font-size:40px;color:#333333;-webkit-text-stroke:0.5px;transform:scaleX(0.9779);">Me, barney lindsey</span>
<span id="t45" class="t" style="left:165.5px;transform-origin:0 50%;top:882px;height:52px;line-height:52px;font-size:40px;color:#333333;-webkit-text-stroke:0.5px;transform:scaleX(0.998);">Last Edits</span>
<span id="t46" class="t" style="left:952.5px;transform-origin:0 50%;top:829.5px;height:39px;line-height:39px;font-size:30px;color:#333333;-webkit-text-stroke:0.375px;transform:scaleX(1.064);">28/12/2022</span>
<div class="b" style="left:20px;top:987px;width:105px;height:105px;background:#81c784;border-radius:50%;"></div>
<span id="t47" class="t" style="left:72.5px;transform-origin:50% 50%;top:1017px;height:43px;line-height:43px;font-size:33px;color:#fff;-webkit-text-stroke:0.413px;transform:translateX(-50%) scaleX(0.9578);-webkit-text-stroke:0.5px;">BL</span>
<span id="t48" class="t" style="left:165.5px;transform-origin:0 50%;top:983px;height:52px;line-height:52px;font-size:40px;color:#333333;-webkit-text-stroke:0.5px;transform:scaleX(0.9779);">Me, barney lindsey</span>
<span id="t49" class="t" style="left:165.5px;transform-origin:0 50%;top:1042px;height:52px;line-height:52px;font-size:40px;color:#333333;-webkit-text-stroke:0.5px;transform:scaleX(1.0025);">New Documents</span>
<span id="t50" class="t" style="left:952.5px;transform-origin:0 50%;top:989.5px;height:39px;line-height:39px;font-size:30px;color:#333333;-webkit-text-stroke:0.375px;transform:scaleX(1.064);">28/12/2022</span>
<div class="b" style="left:20px;top:1147px;width:105px;height:105px;background:#0097a7;border-radius:50%;"></div>
<span id="t51" class="t" style="left:72.5px;transform-origin:50% 50%;top:1177px;height:43px;line-height:43px;font-size:33px;color:#fff;-webkit-text-stroke:0.413px;transform:translateX(-50%) scaleX(0.9377);-webkit-text-stroke:0.5px;">CN</span>
<span id="t52" class="t" style="left:165.5px;transform-origin:0 50%;top:1143px;height:52px;line-height:52px;font-size:40px;color:#333333;-webkit-text-stroke:0.5px;transform:scaleX(0.9813);">Me, cara neville</span>
<span id="t53" class="t" style="left:165.5px;transform-origin:0 50%;top:1202px;height:52px;line-height:52px;font-size:40px;color:#333333;-webkit-text-stroke:0.5px;transform:scaleX(0.9856);">Password Recovered</span>
<span id="t54" class="t" style="left:952.5px;transform-origin:0 50%;top:1149.5px;height:39px;line-height:39px;font-size:30px;color:#333333;-webkit-text-stroke:0.375px;transform:scaleX(1.064);">28/12/2022</span>
<div class="b" style="left:20px;top:1307px;width:105px;height:105px;background:#0097a7;border-radius:50%;"></div>
<span id="t55" class="t" style="left:72.5px;transform-origin:50% 50%;top:1337px;height:43px;line-height:43px;font-size:33px;color:#fff;-webkit-text-stroke:0.413px;transform:translateX(-50%) scaleX(0.9377);-webkit-text-stroke:0.5px;">CN</span>
<span id="t56" class="t" style="left:165.5px;transform-origin:0 50%;top:1303px;height:52px;line-height:52px;font-size:40px;color:#333333;-webkit-text-stroke:0.5px;transform:scaleX(0.9813);">Me, cara neville</span>
<span id="t57" class="t" style="left:165.5px;transform-origin:0 50%;top:1362px;height:52px;line-height:52px;font-size:40px;color:#333333;-webkit-text-stroke:0.5px;transform:scaleX(1.0224);">Prints</span>
<span id="t58" class="t" style="left:952.5px;transform-origin:0 50%;top:1309.5px;height:39px;line-height:39px;font-size:30px;color:#333333;-webkit-text-stroke:0.375px;transform:scaleX(1.064);">28/12/2022</span>
<div class="b" style="left:20px;top:1467px;width:105px;height:105px;background:#0097a7;border-radius:50%;"></div>
<span id="t59" class="t" style="left:72.5px;transform-origin:50% 50%;top:1497px;height:43px;line-height:43px;font-size:33px;color:#fff;-webkit-text-stroke:0.413px;transform:translateX(-50%) scaleX(0.9377);-webkit-text-stroke:0.5px;">CN</span>
<span id="t60" class="t" style="left:165.5px;transform-origin:0 50%;top:1463px;height:52px;line-height:52px;font-size:40px;color:#333333;-webkit-text-stroke:0.5px;transform:scaleX(0.9813);">Me, cara neville</span>
<span id="t61" class="t" style="left:165.5px;transform-origin:0 50%;top:1522px;height:52px;line-height:52px;font-size:40px;color:#333333;-webkit-text-stroke:0.5px;transform:scaleX(0.9984);">New Proposal</span>
<span id="t62" class="t" style="left:952.5px;transform-origin:0 50%;top:1469.5px;height:39px;line-height:39px;font-size:30px;color:#333333;-webkit-text-stroke:0.375px;transform:scaleX(1.064);">28/12/2022</span>
<div class="b" style="left:20px;top:1627px;width:105px;height:105px;background:#0097a7;border-radius:50%;"></div>
<span id="t63" class="t" style="left:72.5px;transform-origin:50% 50%;top:1657px;height:43px;line-height:43px;font-size:33px;color:#fff;-webkit-text-stroke:0.413px;transform:translateX(-50%) scaleX(0.9377);-webkit-text-stroke:0.5px;">CN</span>
<span id="t64" class="t" style="left:165.5px;transform-origin:0 50%;top:1623px;height:52px;line-height:52px;font-size:40px;color:#333333;-webkit-text-stroke:0.5px;transform:scaleX(0.9813);">Me, cara neville</span>
<span id="t65" class="t" style="left:165.5px;transform-origin:0 50%;top:1682px;height:52px;line-height:52px;font-size:40px;color:#333333;-webkit-text-stroke:0.5px;transform:scaleX(0.9858);">Follow Up</span>
<span id="t66" class="t" style="left:952.5px;transform-origin:0 50%;top:1629.5px;height:39px;line-height:39px;font-size:30px;color:#333333;-webkit-text-stroke:0.375px;transform:scaleX(1.064);">28/12/2022</span>
<div class="b" style="left:20px;top:1787px;width:105px;height:105px;background:#ffcc80;border-radius:50%;"></div>
<span id="t67" class="t" style="left:72.5px;transform-origin:50% 50%;top:1817px;height:43px;line-height:43px;font-size:33px;color:#fff;-webkit-text-stroke:0.413px;transform:translateX(-50%) scaleX(0.9059);-webkit-text-stroke:0.5px;">EW</span>
<span id="t68" class="t" style="left:165.5px;transform-origin:0 50%;top:1783px;height:52px;line-height:52px;font-size:40px;color:#333333;-webkit-text-stroke:0.5px;transform:scaleX(0.9894);">Me, ezra warrick</span>
<span id="t69" class="t" style="left:165.5px;transform-origin:0 50%;top:1842px;height:52px;line-height:52px;font-size:40px;color:#333333;-webkit-text-stroke:0.5px;transform:scaleX(1.0014);">Documents Published</span>
<span id="t70" class="t" style="left:952.5px;transform-origin:0 50%;top:1789.5px;height:39px;line-height:39px;font-size:30px;color:#333333;-webkit-text-stroke:0.375px;transform:scaleX(1.064);">28/12/2022</span>
</div>
<div class="b" style="left:2062px;top:273px;width:20px;height:1371px;background:#e6e9ed;border-radius:10px;"></div>
<svg class="ic" style="left:2119px;top:185px;width:50px;height:50px;color:#333333;" viewBox="0 0 24 24" fill="currentColor"><path d="M4.6 10.100L12 5.200l7.400 4.900v7.500a1.500 1.500 0 0 1-1.500 1.500H6.100a1.500 1.500 0 0 1-1.500-1.500z" fill="none" stroke="currentColor" stroke-width="1.700" stroke-linejoin="round"/><path d="M5 10.500l7 4.500 7-4.500" fill="none" stroke="currentColor" stroke-width="1.700" stroke-linejoin="round" stroke-linecap="round"/></svg>
<span id="t71" class="t" style="left:2206.5px;transform-origin:0 50%;top:184px;height:52px;line-height:52px;font-size:40px;color:#333333;-webkit-text-stroke:0.5px;transform:scaleX(0.9806);">File</span>
<svg class="ic" style="left:3750px;top:180px;width:60px;height:60px;color:#333333;" viewBox="0 0 24 24" fill="currentColor"><path d="M13.41 12l4.3-4.29a1 1 0 1 0-1.42-1.42L12 10.59l-4.29-4.3a1 1 0 0 0-1.42 1.42l4.3 4.29-4.3 4.29a1 1 0 0 0 0 1.42 1 1 0 0 0 1.42 0l4.29-4.3 4.29 4.3a1 1 0 0 0 1.42 0 1 1 0 0 0 0-1.42z" /></svg>
<div class="b" style="left:2122px;top:313px;width:1678px;height:739px;background:#fff;border-radius:5px;"></div>
<div class="b" style="left:2142px;top:338px;width:40px;height:40px;background:#f06292;border-radius:50%;"></div>
<span id="t72" class="t" style="left:2162px;transform-origin:50% 50%;top:349px;height:17px;line-height:17px;font-size:13px;color:#fff;transform:translateX(-50%) scaleX(0.9815);-webkit-text-stroke:0.5px;">JD</span>
<span id="t73" class="t" style="left:2201.5px;transform-origin:0 50%;top:334px;height:46px;line-height:46px;font-size:35px;color:#333333;-webkit-text-stroke:0.438px;transform:scaleX(1.0021);">Me</span>
<span id="t74" class="t" style="left:2270.5px;transform-origin:0 50%;top:334.5px;height:46px;line-height:46px;font-size:35px;color:#828282;-webkit-text-stroke:0.438px;transform:scaleX(0.9957);">john.doe@demo.zextras.io</span>
<svg class="ic" style="left:3202px;top:338px;width:38px;height:38px;color:#333333;" viewBox="0 0 24 24" fill="currentColor"><path d="M9.29 21a6.23 6.23 0 0 1-4.43-1.88 6 6 0 0 1-.22-8.49L12 3.2A4.11 4.11 0 0 1 15 2a4.48 4.48 0 0 1 3.19 1.35 4.36 4.36 0 0 1 .15 6.13l-7.4 7.43a2.54 2.54 0 0 1-1.81.75 2.72 2.72 0 0 1-1.95-.82 2.68 2.68 0 0 1-.08-3.77l6.83-6.86a1 1 0 0 1 1.37 1.41l-6.83 6.86a.68.68 0 0 0 .08.95.78.78 0 0 0 .53.23.56.56 0 0 0 .4-.16l7.39-7.43a2.36 2.36 0 0 0-.15-3.31 2.38 2.38 0 0 0-3.27-.15L6.06 12a4 4 0 0 0 .22 5.67 4.22 4.22 0 0 0 3 1.29 3.67 3.67 0 0 0 2.61-1.06l7.39-7.43a1 1 0 1 1 1.42 1.41l-7.39 7.43A5.65 5.65 0 0 1 9.29 21z" /></svg>
<span id="t75" class="t" style="left:3260.5px;transform-origin:0 50%;top:337.5px;height:39px;line-height:39px;font-size:30px;color:#828282;-webkit-text-stroke:0.375px;transform:scaleX(1.064);">25/01/2023</span>
<svg class="ic" style="left:3510px;top:343px;width:30px;height:30px;color:#333333;" viewBox="0 0 24 24" fill="currentColor"><path d="M9.400 5.200L3.400 10.600l6 5.400v-3.300c4.400 0 7.600 1.600 9.600 7.100.400-6.800-3.400-11.200-9.600-11.600z" fill="none" stroke="currentColor" stroke-width="2.300" stroke-linejoin="round"/></svg>
<svg class="ic" style="left:3560px;top:343px;width:30px;height:30px;color:#333333;" viewBox="0 0 24 24" fill="currentColor"><path d="M12.400 5.200L6.600 10.600l5.800 5.400v-3.300c4.200 0 7.200 1.800 9 7.100.200-6.800-3.400-11.200-9-11.600z" stroke="currentColor" stroke-width="2.200" stroke-linejoin="round"/><path d="M7.400 5.200L1.800 10.600l5.600 5.200" fill="none" stroke="currentColor" stroke-width="1.500" stroke-linejoin="round" stroke-linecap="round"/></svg>
<svg class="ic" style="left:3610px;top:343px;width:30px;height:30px;color:#333333;" viewBox="0 0 24 24" fill="currentColor"><path d="M14.200 5.200l6.400 5.400-6.400 5.400v-3.300c-4.800 0-8.200 1.800-10.200 7.100-.200-6.800 3.800-11.200 10.200-11.600z" stroke="currentColor" stroke-width="2.200" stroke-linejoin="round"/></svg>
<svg class="ic" style="left:3660px;top:343px;width:30px;height:30px;color:#333333;" viewBox="0 0 24 24" fill="currentColor"><path d="M21 6h-5V4.33A2.42 2.42 0 0 0 13.5 2h-3A2.42 2.42 0 0 0 8 4.33V6H3a1 1 0 0 0 0 2h1v11a3 3 0 0 0 3 3h10a3 3 0 0 0 3-3V8h1a1 1 0 0 0 0-2zM10 4.33c0-.16.21-.33.5-.33h3c.29 0 .5.17.5.33V6h-4zM18 19a1 1 0 0 1-1 1H7a1 1 0 0 1-1-1V8h12z" /><path d="M9 17a1 1 0 0 0 1-1v-4a1 1 0 0 0-2 0v4a1 1 0 0 0 1 1zM15 17a1 1 0 0 0 1-1v-4a1 1 0 0 0-2 0v4a1 1 0 0 0 1 1z" /></svg>
<svg class="ic" style="left:3710px;top:343px;width:30px;height:30px;color:#333333;" viewBox="0 0 24 24" fill="currentColor"><path d="M19 4H5a3 3 0 0 0-3 3v10a3 3 0 0 0 3 3h14a3 3 0 0 0 3-3V7a3 3 0 0 0-3-3zm-.67 2L12 10.75 5.67 6zM19 18H5a1 1 0 0 1-1-1V7.25l7.4 5.55a1 1 0 0 0 .6.2 1 1 0 0 0 .6-.2L20 7.25V17a1 1 0 0 1-1 1z" /></svg>
<svg class="ic" style="left:3760px;top:343px;width:30px;height:30px;color:#333333;" viewBox="0 0 24 24" fill="currentColor"><circle cx="12" cy="12" r="2"/><circle cx="12" cy="5" r="2"/><circle cx="12" cy="19" r="2"/></svg>
<svg class="ic" style="left:2147px;top:413px;width:30px;height:30px;color:#333333;" viewBox="0 0 24 24" fill="currentColor"><path d="M12 15.5a1 1 0 0 1-.71-.29l-4-4a1 1 0 1 1 1.42-1.42L12 13.1l3.3-3.18a1 1 0 1 1 1.38 1.44l-4 3.86a1 1 0 0 1-.68.28z" /></svg>
<span id="t76" class="t" style="left:2203.5px;transform-origin:0 50%;top:398.5px;height:46px;line-height:46px;font-size:35px;color:#828282;-webkit-text-stroke:0.438px;transform:scaleX(0.9681);">To:</span>
<span id="t77" class="t" style="left:2265.5px;transform-origin:0 50%;top:401.5px;height:46px;line-height:46px;font-size:35px;color:#828282;-webkit-text-stroke:0.438px;transform:scaleX(1.0055);">John doe</span>
<div class="b" style="left:2162px;top:493px;width:789px;height:137.5px;background:#e6e9ed;border-radius:5px;"></div>
<div class="b" style="left:2182px;top:522px;width:80px;height:80px;background:#ef5350;border-radius:5px;"></div>
<span id="t78" class="t" style="left:2222px;transform-origin:50% 50%;top:541.5px;height:38px;line-height:38px;font-size:29px;color:#fff;-webkit-text-stroke:0.363px;transform:translateX(-50%) scaleX(0.9138);-webkit-text-stroke:0.7px;">PDF</span>
<span id="t79" class="t" style="left:2281.5px;transform-origin:0 50%;top:510px;height:52px;line-height:52px;font-size:40px;color:#333333;-webkit-text-stroke:0.5px;transform:scaleX(0.9577);">PDF.pdf</span>
<span id="t80" class="t" style="left:2283px;transform-origin:0 50%;top:566px;height:46px;line-height:46px;font-size:35px;color:#828282;-webkit-text-stroke:0.438px;transform:scaleX(0.9744);">44.10 KB</span>
<div class="b" style="left:2138px;top:643px;width:733px;height:80.5px;background:linear-gradient(90deg,#e31b1c 0%,#ef4d17 45%,#ff8c0a 100%);border-radius:11px;"></div>
<div class="b" style="left:2148px;top:653px;width:713px;height:60.5px;background:#fff;border-radius:2px;"></div>
<span id="t81" class="t" style="left:2161.5px;transform-origin:0 50%;top:658px;height:52px;line-height:52px;font-size:40px;color:#828282;-webkit-text-stroke:0.5px;transform:scaleX(1.0333);">1 Attachment</span>
<span id="t82" class="t" style="left:2422.5px;transform-origin:0 50%;top:658px;height:52px;line-height:52px;font-size:40px;color:#2b73d2;-webkit-text-stroke:0.5px;transform:scaleX(1.0);">Download</span>
<span id="t83" class="t" style="left:2620.5px;transform-origin:0 50%;top:658px;height:52px;line-height:52px;font-size:40px;color:#2b73d2;-webkit-text-stroke:0.5px;transform:scaleX(0.9747);">Save to Files</span>
<span id="t84" class="t" style="left:2182px;transform-origin:0 50%;top:784px;height:52px;line-height:52px;font-size:40px;color:#000;transform:scaleX(1.0);">Hello,</span>
<span id="t85" class="t" style="left:2182px;transform-origin:0 50%;top:874px;height:52px;line-height:52px;font-size:40px;color:#000;transform:scaleX(1.0);">Please find the file attached.</span>
</div>
<script>(function(){var w=window.innerWidth;if(w&&Math.abs(w-3840)>2){var a=document.getElementById("app");a.style.transformOrigin="0 0";a.style.transform="scale("+(w/3840)+")";}})();</script>
</body></html>
